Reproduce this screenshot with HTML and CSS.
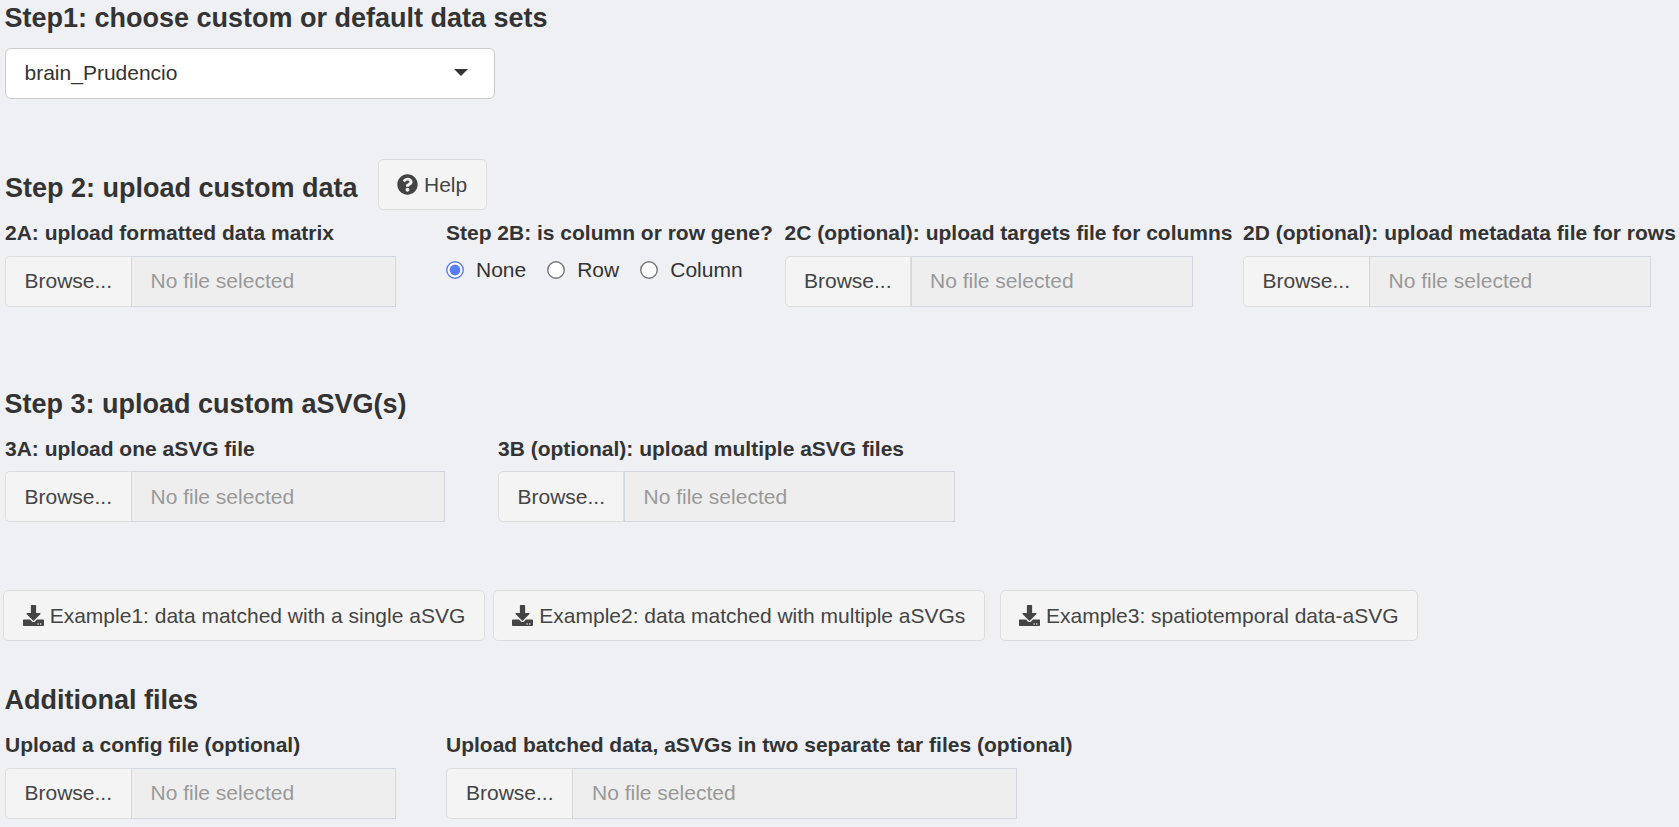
FILE: index.html
```html
<!DOCTYPE html>
<html lang="en">
<head>
<meta charset="utf-8">
<title>Data upload</title>
<link rel="stylesheet" href="styles.css">
</head>
<body>
<svg class="defs" width="0" height="0" aria-hidden="true">
  <symbol id="i-help" viewBox="0 0 512 512"><path d="M504 256c0 136.997-111.043 248-248 248S8 392.997 8 256C8 119.083 119.043 8 256 8s248 111.083 248 248zM262.655 90c-54.497 0-89.255 22.957-116.549 63.758-3.536 5.286-2.353 12.415 2.715 16.258l34.699 26.31c5.205 3.947 12.621 3.008 16.665-2.122 17.864-22.658 30.113-35.797 57.303-35.797 20.429 0 45.698 13.148 45.698 32.958 0 14.976-12.363 22.667-32.534 33.976C247.128 238.528 216 254.941 216 296v4c0 6.627 5.373 12 12 12h56c6.627 0 12-5.373 12-12v-1.333c0-28.462 83.186-29.647 83.186-106.667 0-58.002-60.165-102-116.531-102zM256 338c-25.365 0-46 20.635-46 46 0 25.364 20.635 46 46 46s46-20.636 46-46c0-25.365-20.635-46-46-46z"/></symbol>
  <symbol id="i-download" viewBox="0 0 512 512"><path d="M216 0h80c13.3 0 24 10.7 24 24v168h87.7c17.8 0 26.7 21.5 14.1 34.1L269.7 378.3c-7.5 7.5-19.8 7.5-27.3 0L90.1 226.1c-12.6-12.6-3.7-34.1 14.1-34.1H192V24c0-13.3 10.7-24 24-24zm296 376v112c0 13.3-10.7 24-24 24H24c-13.3 0-24-10.7-24-24V376c0-13.3 10.7-24 24-24h146.7l49 49c20.1 20.1 52.5 20.1 72.6 0l49-49H488c13.3 0 24 10.7 24 24zm-124 88c0-11-9-20-20-20s-20 9-20 20 9 20 20 20 20-9 20-20zm64 0c0-11-9-20-20-20s-20 9-20 20 9 20 20 20 20-9 20-20z"/></symbol>
</svg>
<main class="page">
  <section>
    <h4 class="title">Step1: choose custom or default data sets</h4>
    <div class="select"><span>brain_Prudencio</span><span class="caret"></span></div>
  </section>

  <section class="step2">
    <div class="title-row">
      <h4 class="title">Step 2: upload custom data</h4>
      <button class="btn help"><svg class="icon"><use href="#i-help"/></svg>Help</button>
    </div>
    <div class="grid grid-step2">
      <div class="field">
        <div class="label">2A: upload formatted data matrix</div>
        <div class="file w-s"><span class="browse">Browse...</span><span class="name">No file selected</span></div>
      </div>
      <div class="field">
        <div class="label">Step 2B: is column or row gene?</div>
        <div class="radios">
          <label class="radio"><svg class="dot on" viewBox="0 0 18 18"><circle class="ring" cx="9" cy="9" r="8.25"/><circle class="core" cx="9" cy="9" r="5.4"/></svg>None</label>
          <label class="radio"><svg class="dot" viewBox="0 0 18 18"><circle class="ring" cx="9" cy="9" r="8.25"/></svg>Row</label>
          <label class="radio"><svg class="dot" viewBox="0 0 18 18"><circle class="ring" cx="9" cy="9" r="8.25"/></svg>Column</label>
        </div>
      </div>
      <div class="field">
        <div class="label nudge">2C (optional): upload targets file for columns</div>
        <div class="file w-m split"><span class="browse">Browse...</span><span class="name">No file selected</span></div>
      </div>
      <div class="field">
        <div class="label">2D (optional): upload metadata file for rows</div>
        <div class="file w-m"><span class="browse">Browse...</span><span class="name">No file selected</span></div>
      </div>
    </div>
  </section>

  <section class="step3">
    <h4 class="title">Step 3: upload custom aSVG(s)</h4>
    <div class="grid grid-step3">
      <div class="field">
        <div class="label">3A: upload one aSVG file</div>
        <div class="file w-l"><span class="browse">Browse...</span><span class="name">No file selected</span></div>
      </div>
      <div class="field">
        <div class="label">3B (optional): upload multiple aSVG files</div>
        <div class="file w-xl split"><span class="browse">Browse...</span><span class="name">No file selected</span></div>
      </div>
    </div>
  </section>

  <div class="examples">
    <button class="btn ex1"><svg class="icon"><use href="#i-download"/></svg>Example1: data matched with a single aSVG</button>
    <button class="btn ex2"><svg class="icon"><use href="#i-download"/></svg>Example2: data matched with multiple aSVGs</button>
    <button class="btn ex3"><svg class="icon"><use href="#i-download"/></svg>Example3: spatiotemporal data-aSVG</button>
  </div>

  <section class="extra">
    <h4 class="title">Additional files</h4>
    <div class="grid grid-extra">
      <div class="field">
        <div class="label">Upload a config file (optional)</div>
        <div class="file w-s"><span class="browse">Browse...</span><span class="name">No file selected</span></div>
      </div>
      <div class="field">
        <div class="label">Upload batched data, aSVGs in two separate tar files (optional)</div>
        <div class="file w-xxl"><span class="browse">Browse...</span><span class="name">No file selected</span></div>
      </div>
    </div>
  </section>
</main>
</body>
</html>
```
FILE: styles.css
```css
* { box-sizing: border-box; }
html, body { margin: 0; height: 827px; overflow: hidden; }
body {
  background: #eef0f4;
  color: #333;
  font: 21px/30px "Liberation Sans", Arial, sans-serif;
}
.defs { display: block; }
.page { padding: 3px 0 0 5px; }

.title { margin: 0 0 0 -0.5px; font-size: 27px; line-height: 30px; font-weight: 700; white-space: nowrap; }
.label { font-weight: 700; white-space: nowrap; height: 38px; }
.nudge { margin-left: -0.5px; }

.select {
  display: flex; align-items: center; justify-content: space-between;
  width: 490px; height: 51px; margin-top: 15px; padding: 0 26px 2px 18.5px;
  background: #fff; border: 1px solid #ccc; border-radius: 6px;
}
.caret {
  border: 7.5px solid transparent; border-top-color: #333; border-bottom: 0;
}

.step2 { margin-top: 60px; }
.title-row { display: flex; align-items: flex-start; height: 51px; }
.title-row .title { width: 373px; margin: 14px 0 0; }

.btn {
  display: flex; align-items: center; height: 51px; padding: 0 0 0 18px; flex: none;
  background: #f4f4f4; border: 1px solid #ddd; border-radius: 5px;
  color: #444; font: inherit; white-space: nowrap;
}
.icon { width: 21px; height: 21px; margin-right: 6px; fill: currentColor; flex: none; }
.help { width: 109px; }

.grid { display: grid; }
.grid-step2 { grid-template-columns: 441px 339px 458px 1fr; margin-top: 8px; }
.grid-step3 { grid-template-columns: 493px 1fr; margin-top: 15px; }
.grid-step3 .label { height: 37px; }
.grid-extra { grid-template-columns: 441px 1fr; margin-top: 15px; }
.field { min-width: 0; }

.file { display: flex; height: 51px; }
.browse {
  width: 126px; padding: 9px 0 0 18.5px;
  background: #f4f4f4; border: 1px solid #ddd; border-right: 0;
  border-radius: 5px 0 0 5px; color: #444;
}
.name {
  flex: 1; padding: 9px 0 0 18.5px;
  background: #eee; border: 1px solid #d2d6de; color: #999;
}
.split .browse { border-right: 1px solid #ddd; padding-left: 18px; }
.split .name { padding-left: 18px; }
.grid-step3 .browse, .grid-step3 .name { padding-top: 10px; }
.grid-step3 .split .browse, .grid-step3 .split .name { padding-left: 18.5px; }
.w-s { width: 391px; }
.w-m { width: 408px; }
.w-l { width: 440px; }
.w-xl { width: 457px; }
.w-xxl { width: 571px; }
.w-xxl .browse, .w-xxl .name { padding-left: 19px; }

.radios { display: flex; gap: 21px; margin-top: -1px; }
.radio { display: flex; align-items: center; gap: 12px; }
.dot { width: 18px; height: 18px; }
.ring { fill: #fff; stroke: #767676; stroke-width: 1.4; }
.on .ring { stroke: #5b7cf8; }
.core { fill: #5b7cf8; }

.step3 { margin-top: 82px; }
.examples { display: flex; margin: 68px 0 0 -2px; }
.ex1 { width: 482px; margin-right: 8px; padding-left: 18.7px; }
.ex2 { width: 492px; margin-right: 15px; padding-left: 18.3px; }
.ex3 { width: 418px; }
.extra { margin-top: 44px; }
```
